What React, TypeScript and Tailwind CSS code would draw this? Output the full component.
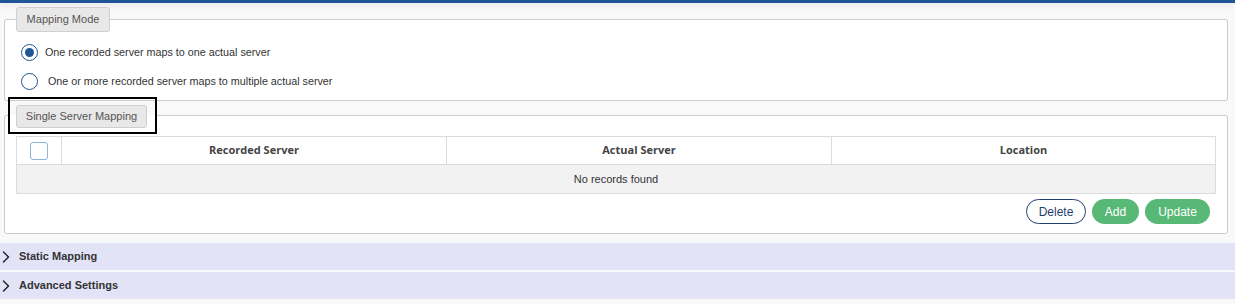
import { ChevronRight } from "lucide-react";

const legendBtn =
  "rounded-[3px] border border-[#cfcfcf] bg-[#e8e8e8] text-[11px] text-[#555] font-['Liberation_Sans',Arial,sans-serif]";

const Radio = ({ checked, label, gap }: { checked?: boolean; label: string; gap: string }) => (
  <label className={`flex items-center ${gap} text-[10.75px] text-[#333]`}>
    <span className="flex size-[17px] items-center justify-center rounded-full border-[1.5px] border-[#1f5596] bg-white">
      {checked && <span className="size-[9px] rounded-full bg-[#1f5596]" />}
    </span>
    {label}
  </label>
);

const AccordionRow = ({ title }: { title: string }) => (
  <div className="flex h-[27px] items-center gap-[3px] bg-[#e3e3f7] text-[11px] font-bold text-[#333]">
    <ChevronRight className="-ml-[4px] size-[20px] text-[#222]" strokeWidth={1.7} />
    {title}
  </div>
);

export default function App() {
  return (
    <div className="h-[304px] w-[1235px] overflow-hidden bg-[#f9f9f9] font-['Liberation_Sans',Arial,sans-serif]">
      <div className="h-[3px] bg-[#1f5596] shadow-[0_2px_6px_rgba(0,0,0,0.12)]" />

      <div className="px-[4px] pr-[7px] pt-[4px]">
        <fieldset className="rounded-[3px] border border-[#cccccc] bg-white px-[11px] pb-[10px]">
          <legend className={`${legendBtn} h-[25px] w-[94px]`}>
            <span className="flex h-full items-center justify-center">Mapping Mode</span>
          </legend>
          <div className="flex flex-col gap-[12px] pl-[5px] pt-[12px]">
            <Radio checked gap="gap-[7px]" label="One recorded server maps to one actual server" />
            <Radio gap="gap-[10px]" label="One or more recorded server maps to multiple actual server" />
          </div>
        </fieldset>

        <fieldset className="-mt-[2px] rounded-[3px] border border-[#cccccc] bg-white pb-[9px] pl-[5px] pr-[11px]">
          {/* focus ring around the legend button */}
          <legend className="pb-[4px] pl-[6px] pr-[8px] pt-[6px] outline-2 outline-black">
            <span className={`${legendBtn} flex h-[23px] w-[131px] items-center justify-center`}>
              Single Server Mapping
            </span>
          </legend>
          <div className="pl-[6px]">
            <table className="mt-[4px] w-full border-collapse border border-[#dcdcdc] text-[11px]">
              <thead>
                <tr className="h-[28px] bg-white font-['Open_Sans',sans-serif] font-semibold text-[#444]">
                  <th className="w-[45px] border border-[#dcdcdc]">
                    <span className="mx-auto block size-[18px] rounded-[3px] border border-[#8fb3d6] bg-white" />
                  </th>
                  <th className="w-[385px] border border-[#dcdcdc]">Recorded Server</th>
                  <th className="w-[385px] border border-[#dcdcdc]">Actual Server</th>
                  <th className="border border-[#dcdcdc]">Location</th>
                </tr>
              </thead>
              <tbody>
                <tr className="h-[29px] bg-[#f2f2f2]">
                  <td colSpan={4} className="text-center text-[#333]">
                    No records found
                  </td>
                </tr>
              </tbody>
            </table>
            <div className="mt-[5px] flex justify-end gap-[6px] pr-[6px] text-[12px]">
              <button className="h-[25px] w-[60px] rounded-full border border-[#1f3f6e] bg-white text-[#1f3f6e]">
                Delete
              </button>
              <button className="h-[25px] w-[47px] rounded-full bg-[#58b875] text-white">Add</button>
              <button className="h-[25px] w-[65px] rounded-full bg-[#58b875] text-white">Update</button>
            </div>
          </div>
        </fieldset>
      </div>

      <div className="mt-[9px] flex flex-col gap-[2px]">
        <AccordionRow title="Static Mapping" />
        <AccordionRow title="Advanced Settings" />
      </div>
    </div>
  );
}
